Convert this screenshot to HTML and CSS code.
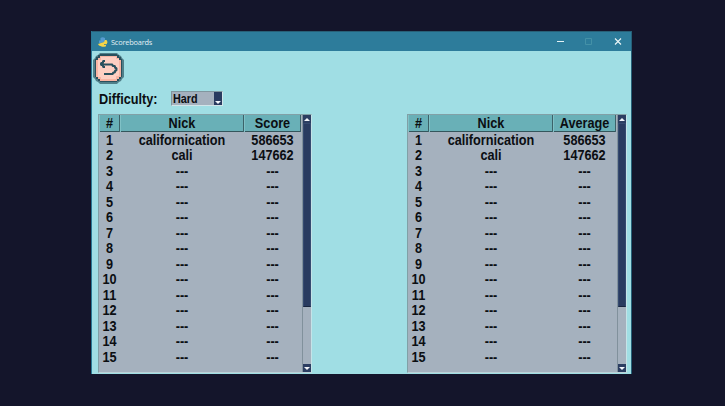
FILE: index.html
```html
<!DOCTYPE html>
<html lang="en">
<head>
<meta charset="utf-8">
<title>Scoreboards</title>
<link rel="stylesheet" href="styles.css">
</head>
<body>
<main class="window">
  <header class="titlebar">
    <svg class="logo" viewBox="0 0 10 10"><path fill="#569bd0" d="M2.500 1q2-1.500 4.500 0v3.500L3 6H1V3.500h1.500z"/><path fill="#f5d547" d="M7 3h1.500l1 2-.8 2.300H6V8h2v1.200Q5 10.500 3 9.200L1 8.500 0 7l3-1 3-1z"/></svg>
    <span class="caption">Scoreboards</span>
    <svg class="controls" viewBox="0 0 66 10"><path d="M1 4.500h7" stroke="#e4f2f5"/><path d="M29.500 1.500h6v6h-6z" fill="none" stroke="#4491a7"/><path d="M59 1.500l6 6M65 1.500l-6 6" stroke="#edf7f8" stroke-width="1.100"/></svg>
  </header>
  <button class="back" aria-label="Back">
    <svg viewBox="0 0 31 31">
      <path fill="#507f89" d="M7 0h17l2 2 2 1 1 2 2 2v17l-2 2-1 2-2 1-2 2H7l-2-2-2-1-1-2-2-2V7l2-2 1-2 2-1z"/>
      <path fill="#29505d" d="M7 1h17v1h2v2h2v2h1v18h-1v2h-2v2h-2v1H7v-1H5v-2H3v-2H2V6h1V4h2V2h2z"/>
      <path fill="#f8b5a4" d="M7 3h17v2h2v2h2v17h-2v2h-2v2H7v-2H5v-2H3V7h2V5h2z"/>
      <path fill="#fecfc2" d="M8 4h15v2h3v17h-3v3H8v-2H5V7h3z"/>
      <path fill="none" stroke="#29505d" stroke-width="1.900" stroke-linejoin="bevel" d="M12 8h-2v2H8v2h2v2h2M8 11.500h11.500v1.500h2.500v2h1.500v2.500H22v2h-2v1.500h-9"/>
    </svg>
  </button>
  <div class="filter"><span class="label">Difficulty:</span><div class="select"><span>Hard</span><i class="drop"></i></div></div>
  <div class="boards" id="boards"></div>
</main>
<script src="script.js"></script>
</body>
</html>
```
FILE: styles.css
```css
* { box-sizing: border-box; }
body { margin: 0; width: 725px; height: 406px; overflow: hidden; background: #14152b; padding: 31px 0 0 91px; font-family: "Liberation Sans", sans-serif; font-weight: bold; color: #0b0e12; }
.window { width: 541px; height: 343px; background: #a0dee4; overflow: hidden; border-left: 1px solid #2a7895; border-right: 1px solid #266078; display: flex; flex-direction: column; }
.titlebar { flex: none; height: 20px; background: #2d7c9b; border-top: 1px solid #286077; display: flex; align-items: center; padding: 0 9px 0 6px; }
.logo { width: 10px; height: 10px; margin-right: 3px; }
.caption { font: 7.4px "Open Sans", sans-serif; letter-spacing: -0.2px; color: #e3f1f5; flex: 1; transform: translateY(-0.5px) scaleY(1.08); }
.controls { width: 66px; height: 10px; }
.back { display: block; flex: none; width: 31px; height: 31px; margin: 2px 0 0 1px; padding: 0; border: 0; background: none; }
.back svg { display: block; width: 31px; height: 31px; }
.filter { display: flex; align-items: center; height: 15px; margin: 7px 0 0 7px; flex: none; }
.label { width: 72px; font-size: 12.7px; transform: translateY(1px) scaleY(1.09); }
.select { width: 52px; height: 15px; display: flex; background: #a5b1be; border: 1px solid #80979f; border-right-color: #d2e5e9; border-bottom-color: #d2e5e9; font-size: 10.8px; line-height: 13px; padding-left: 1px; }
.select span { flex: 1; transform: translateY(0.4px) scaleY(1.1); }
.drop { width: 8px; background: #293b60; display: flex; align-items: flex-end; justify-content: center; padding-bottom: 1px; }
.drop::after { content: ""; border: 3px solid transparent; border-top: 3px solid #f2f5fa; border-bottom: 0; }
.boards { display: flex; gap: 95px; margin: 8px 0 0 6px; height: 259px; flex: none; }
.board { display: flex; width: 214px; height: 259px; background: #a5b1be; border: 1px solid #81a0a6; border-bottom-color: #bbd0d6; border-right-color: #c5e3e7; }
.board.wide { width: 220px; }
.table { flex: 1; }
.row { display: grid; grid-template-columns: 21px 124px 1fr; height: 15.47px; line-height: 15.5px; font-size: 12.7px; text-align: center; }
.row b { display: block; transform: translateY(1.7px) scaleY(1.09); }
.row.head { height: 17px; line-height: 17px; background: #69b0b7; border-bottom: 1px solid #34565c; }
.row.head b { transform: translateY(0.9px) scaleY(1.09); }
.head span { border-right: 1px solid #3c6269; border-left: 1px solid #80c1c6; }
.scroll { width: 9px; margin-left: 1px; display: flex; flex-direction: column; align-items: center; background: #a5b1be; border-left: 1px solid #81919c; }
.up, .down { width: 8px; height: 8px; background: #2c3e62; display: grid; place-items: center; flex: none; }
.up::after, .down::after { content: ""; border: 3px solid transparent; border-bottom: 3px solid #f2f5fa; border-top: 0; }
.down::after { border-top: 3px solid #f2f5fa; border-bottom: 0; }
.thumb { width: 8px; height: 184px; background: #293b60; border: 1px solid #354a70; border-bottom-color: #18253f; flex: none; }
.down { margin-top: auto; }
```
FILE: script.js
```js
const players = [["californication", "586653"], ["cali", "147662"]];
const row = (cells, cls = "") => `<div class="row ${cls}">${cells.map(c => `<span><b>${c}</b></span>`).join("")}</div>`;
const board = (measure, cls) => {
  const rows = Array.from({ length: 15 }, (_, i) => row([i + 1, ...(players[i] || ["---", "---"])]));
  return `<section class="board ${cls}"><div class="table">${row(["#", "Nick", measure], "head")}${rows.join("")}</div><div class="scroll"><i class="up"></i><i class="thumb"></i><i class="down"></i></div></section>`;
};
document.getElementById("boards").innerHTML = board("Score", "") + board("Average", "wide");
```
